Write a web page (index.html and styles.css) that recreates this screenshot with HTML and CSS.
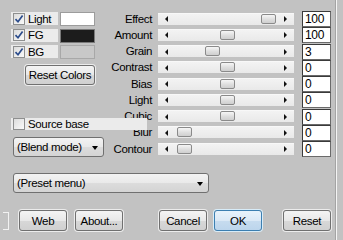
FILE: index.html
```html
<!DOCTYPE html>
<html lang="en">
<head>
    <meta charset="UTF-8">
    <title>Filter settings</title>
    <link rel="stylesheet" href="styles.css">
</head>
<body>
    <div class="window">
        <div class="panel">
            <div class="top">
                <div class="left">
                    <div class="color-row">
                        <label class="check"><span class="box"><svg width="12" height="12" viewBox="0 0 12 12"><path d="M2.5 6.2 L5 8.8 L9.6 2.6" fill="none" stroke="#2b4c8c" stroke-width="1.7"/></svg></span>Light</label>
                        <span class="swatch swatch-light"></span>
                    </div>
                    <div class="color-row">
                        <label class="check"><span class="box"><svg width="12" height="12" viewBox="0 0 12 12"><path d="M2.5 6.2 L5 8.8 L9.6 2.6" fill="none" stroke="#2b4c8c" stroke-width="1.7"/></svg></span>FG</label>
                        <span class="swatch swatch-fg"></span>
                    </div>
                    <div class="color-row">
                        <label class="check"><span class="box"><svg width="12" height="12" viewBox="0 0 12 12"><path d="M2.5 6.2 L5 8.8 L9.6 2.6" fill="none" stroke="#2b4c8c" stroke-width="1.7"/></svg></span>BG</label>
                        <span class="swatch swatch-bg"></span>
                    </div>
                    <button class="btn reset-colors">Reset Colors</button>
                    <label class="check source"><span class="box"></span>Source base</label>
                    <div class="select blend">(Blend mode)<span class="caret"></span></div>
                </div>

                <div class="sliders">
                    <div class="slider-row">
                        <span class="name">Effect</span>
                        <div class="track"><span class="arrow arrow-left"></span><span class="thumb" style="left: 103px"></span><span class="arrow arrow-right"></span></div>
                        <div class="value">100</div>
                    </div>
                    <div class="slider-row">
                        <span class="name">Amount</span>
                        <div class="track"><span class="arrow arrow-left"></span><span class="thumb" style="left: 62px"></span><span class="arrow arrow-right"></span></div>
                        <div class="value">100</div>
                    </div>
                    <div class="slider-row">
                        <span class="name">Grain</span>
                        <div class="track"><span class="arrow arrow-left"></span><span class="thumb" style="left: 47px"></span><span class="arrow arrow-right"></span></div>
                        <div class="value">3</div>
                    </div>
                    <div class="slider-row">
                        <span class="name">Contrast</span>
                        <div class="track"><span class="arrow arrow-left"></span><span class="thumb" style="left: 62px"></span><span class="arrow arrow-right"></span></div>
                        <div class="value">0</div>
                    </div>
                    <div class="slider-row">
                        <span class="name">Bias</span>
                        <div class="track"><span class="arrow arrow-left"></span><span class="thumb" style="left: 62px"></span><span class="arrow arrow-right"></span></div>
                        <div class="value">0</div>
                    </div>
                    <div class="slider-row">
                        <span class="name">Light</span>
                        <div class="track"><span class="arrow arrow-left"></span><span class="thumb" style="left: 62px"></span><span class="arrow arrow-right"></span></div>
                        <div class="value">0</div>
                    </div>
                    <div class="slider-row">
                        <span class="name">Cubic</span>
                        <div class="track"><span class="arrow arrow-left"></span><span class="thumb" style="left: 62px"></span><span class="arrow arrow-right"></span></div>
                        <div class="value">0</div>
                    </div>
                    <div class="slider-row">
                        <span class="name">Blur</span>
                        <div class="track"><span class="arrow arrow-left"></span><span class="thumb" style="left: 19px"></span><span class="arrow arrow-right"></span></div>
                        <div class="value">0</div>
                    </div>
                    <div class="slider-row">
                        <span class="name">Contour</span>
                        <div class="track"><span class="arrow arrow-left"></span><span class="thumb" style="left: 19px"></span><span class="arrow arrow-right"></span></div>
                        <div class="value">0</div>
                    </div>
                </div>
            </div>

            <div class="select preset">(Preset menu)<span class="caret"></span></div>

            <div class="buttons">
                <span class="edge"></span>
                <button class="btn web">Web</button>
                <button class="btn about">About...</button>
                <button class="btn cancel">Cancel</button>
                <button class="btn ok">OK</button>
                <button class="btn reset">Reset</button>
            </div>
        </div>
        <div class="divider"></div>
    </div>
</body>
</html>
```

FILE: styles.css
```css
body {
    margin: 0;
    background: #c2c2c2;
    font-family: "Liberation Sans", Arial, sans-serif;
    font-size: 11.5px;
    letter-spacing: -0.35px;
    color: #000;
}

.window {
    display: flex;
    width: 343px;
    height: 240px;
    overflow: hidden;
}

.panel {
    width: 335px;
    padding-top: 11px;
}

.divider {
    width: 1px;
    height: 240px;
    background: #a4a4a4;
    border-right: 1px solid #f4f4f4;
}

.top {
    display: flex;
}

/* left column */
.left {
    width: 94px;
    margin-left: 11px;
    padding-top: 1px;
    display: flex;
    flex-direction: column;
    align-items: flex-start;
}

.color-row {
    display: flex;
    align-items: flex-start;
    height: 16px;
    margin-bottom: 0.5px;
}

.check {
    display: flex;
    align-items: center;
    gap: 3px;
    height: 13px;
    padding-left: 2px;
    background: #ebebeb;
    white-space: nowrap;
}

.color-row .check {
    width: 45px;
}

.box {
    width: 12px;
    height: 12px;
    box-sizing: border-box;
    border: 1px solid #8e8f8f;
    background: linear-gradient(135deg, #dcdcdc, #fafafa);
    display: flex;
}

.box svg {
    margin: -1px;
}

.swatch {
    width: 35px;
    height: 14px;
    margin-left: 2px;
    box-sizing: border-box;
    border: 1px solid #9c9c9c;
}

.swatch-light {
    background: #fff;
}

.swatch-fg {
    background: #1c1c1c;
    border-color: #7a7a7a;
}

.swatch-bg {
    background: #c8c8c8;
    border-color: #a8a8a8;
}

.btn {
    font: inherit;
    letter-spacing: inherit;
    color: #000;
    height: 21px;
    padding: 0;
    box-sizing: border-box;
    border: 1px solid #707070;
    border-radius: 3px;
    background: linear-gradient(#f4f4f4, #e8e8e8 50%, #d8d8d8 51%, #d0d0d0);
    box-shadow: 0 0 0 1px #ececec;
}

.reset-colors {
    width: 70px;
    height: 20px;
    margin-top: 3.5px;
    margin-left: 14px;
}

.source {
    position: relative;
    z-index: 1;
    width: 134px;
    height: 12px;
    margin-top: 33px;
}

.select {
    position: relative;
    height: 20px;
    box-sizing: border-box;
    padding-left: 3px;
    line-height: 18px;
    border: 1px solid #707070;
    border-radius: 3px;
    background: linear-gradient(#f3f3f3, #e9e9e9 50%, #dcdcdc 51%, #d4d4d4);
}

.caret {
    position: absolute;
    right: 5px;
    top: 8px;
    border-left: 3.5px solid transparent;
    border-right: 3.5px solid transparent;
    border-top: 4px solid #000;
}

.blend {
    width: 91px;
    margin-top: 7px;
    margin-left: 2px;
}

.preset {
    width: 196px;
    margin-top: 16px;
    margin-left: 13px;
}

/* sliders */
.sliders {
    display: flex;
    flex-direction: column;
}

.slider-row {
    display: flex;
    height: 16.25px;
}

.name {
    width: 47px;
    text-align: right;
    line-height: 12px;
    margin-top: 1.5px;
    white-space: nowrap;
}

.track {
    position: relative;
    width: 136px;
    height: 12px;
    margin-top: 1.5px;
    margin-left: 6px;
    padding: 0 7px;
    box-sizing: border-box;
    display: flex;
    align-items: center;
    justify-content: space-between;
    background: linear-gradient(#f3f3f3, #e9e9e9);
    border-top: 1px solid #f8f8f8;
}

.arrow {
    width: 0;
    height: 0;
    border-top: 3px solid transparent;
    border-bottom: 3px solid transparent;
}

.arrow-left {
    border-right: 3px solid #111;
}

.arrow-right {
    border-left: 3px solid #111;
}

.thumb {
    position: absolute;
    top: 0;
    width: 15px;
    height: 10px;
    box-sizing: border-box;
    border: 1px solid #8a8a8a;
    border-radius: 2px;
    background: linear-gradient(#f6f6f6, #dedede 55%, #cfcfcf);
}

.value {
    width: 29px;
    height: 16px;
    margin-left: 8px;
    box-sizing: border-box;
    padding-left: 2px;
    line-height: 14px;
    font-size: 12px;
    background: #fff;
    border: 1px solid #3a3a3a;
    border-right-color: #6a6a6a;
    border-bottom-color: #6a6a6a;
}

/* bottom buttons */
.buttons {
    display: flex;
    align-items: center;
    margin-top: 17px;
}

.edge {
    width: 5px;
    height: 16px;
    margin-left: 3px;
    border: 1px solid #f2f2f2;
    border-left: none;
}

.buttons .btn {
    width: 48px;
}

.web {
    margin-left: 10px;
}

.about {
    margin-left: 8px;
}

.cancel {
    margin-left: 36px;
}

.ok {
    margin-left: 7px;
    border-color: #3c7fb1;
    background: linear-gradient(#e8f3fc, #dbe9f6 50%, #c7dcef 51%, #bcd5ec);
    box-shadow: 0 0 0 1px #d8ecf8;
}

.reset {
    margin-left: 21px;
}
```
